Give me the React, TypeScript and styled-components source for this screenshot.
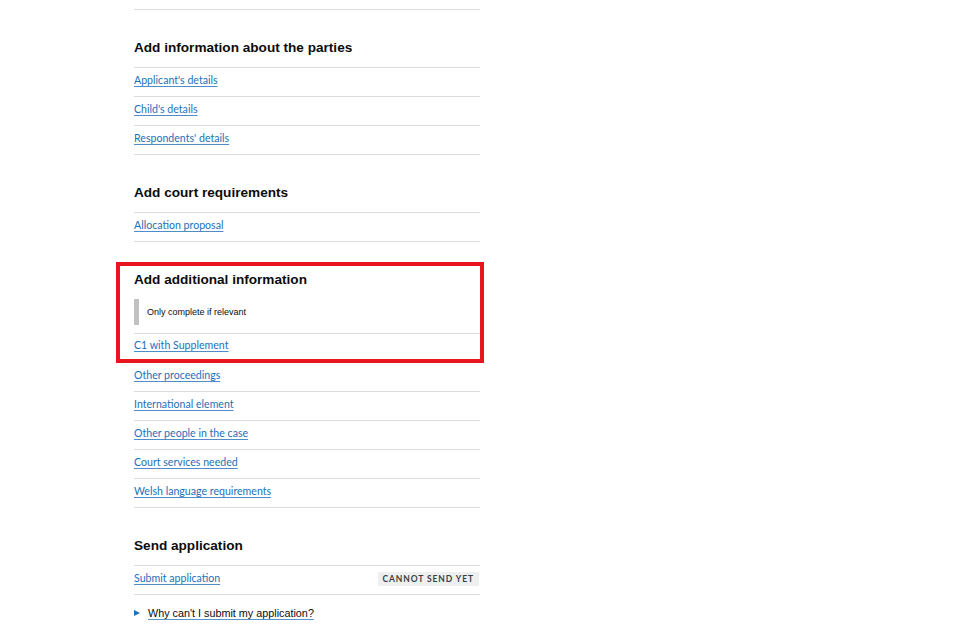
import styled, { createGlobalStyle } from "styled-components";

const GlobalStyle = createGlobalStyle`
  body {
    margin: 0;
    background: #ffffff;
    font-family: "Liberation Sans", Arial, sans-serif;
    color: #0b0c0c;
  }
`;

type Task = { label: string; tag?: string };

const Column = styled.div`
  width: 346px;
  margin-left: 134px;
  display: flex;
  flex-direction: column;
`;

const TopRule = styled.div`
  height: 9px;
  border-bottom: 1px solid #dcdcdc;
`;

const Section = styled.section<{ $tight?: boolean }>`
  padding-top: ${({ $tight }) => ($tight ? "4px" : "28px")};
`;

const Heading = styled.h2`
  margin: 0 0 9px;
  font-size: 13.6px;
  line-height: 20px;
  font-weight: 700;
  color: #0b0c0c;
`;

const List = styled.ul<{ $open?: boolean }>`
  list-style: none;
  margin: 0;
  padding: 0;
  border-top: ${({ $open }) => ($open ? "none" : "1px solid #dcdcdc")};
`;

const Row = styled.li<{ $last?: boolean }>`
  height: ${({ $last }) => ($last ? "25px" : "28px")};
  display: flex;
  align-items: center;
  justify-content: space-between;
  border-bottom: ${({ $last }) => ($last ? "none" : "1px solid #dcdcdc")};
`;

const TaskLink = styled.a`
  font-family: Lato, "Noto Sans", sans-serif;
  font-size: 10.6px;
  color: #1d70b8;
  text-decoration: underline;
  text-decoration-color: #4f8cc9;
  text-underline-offset: 2px;
  margin-top: -4px;
`;

const Tag = styled.span`
  display: inline-flex;
  align-items: center;
  height: 14px;
  padding: 0 5px;
  background: #eeefef;
  color: #383f43;
  font-family: Lato, sans-serif;
  font-weight: 700;
  font-size: 8.5px;
  letter-spacing: 0.9px;
  margin-right: 1px;
  margin-top: -2px;
`;

const Highlight = styled.div`
  margin: 20px -4px 0 -18px;
  padding-left: 14px;
  border: 4px solid #e8141f;
`;

const Inset = styled.div`
  height: 26px;
  margin: 9px 0 8px;
  padding-left: 8px;
  border-left: 5px solid #bfc1c3;
  display: flex;
  align-items: center;
  font-size: 9px;
  color: #0b0c0c;
`;

const Details = styled.div`
  margin-top: 10px;
  display: flex;
  align-items: center;
  gap: 8px;
`;

const Marker = styled.span`
  width: 0;
  height: 0;
  border-top: 3.5px solid transparent;
  border-bottom: 3.5px solid transparent;
  border-left: 6px solid #1d70b8;
`;

const Summary = styled.span`
  font-size: 10.8px;
  line-height: 16px;
  color: #0b0c0c;
  text-decoration: underline;
  text-decoration-color: #5694ca;
  text-underline-offset: 2px;
`;

const TaskList = ({
  tasks,
  lastOpen,
  open,
}: {
  tasks: Task[];
  lastOpen?: boolean;
  open?: boolean;
}) => (
  <List $open={open}>
    {tasks.map((task, i) => (
      <Row key={task.label} $last={lastOpen && i === tasks.length - 1}>
        <TaskLink href="#">{task.label}</TaskLink>
        {task.tag && <Tag>{task.tag}</Tag>}
      </Row>
    ))}
  </List>
);

const parties: Task[] = [
  { label: "Applicant's details" },
  { label: "Child's details" },
  { label: "Respondents' details" },
];

const court: Task[] = [{ label: "Allocation proposal" }];

const additional: Task[] = [
  { label: "Other proceedings" },
  { label: "International element" },
  { label: "Other people in the case" },
  { label: "Court services needed" },
  { label: "Welsh language requirements" },
];

export default function App() {
  return (
    <>
      <GlobalStyle />
      <Column>
        <TopRule />
        <Section>
          <Heading>Add information about the parties</Heading>
          <TaskList tasks={parties} />
        </Section>
        <Section>
          <Heading>Add court requirements</Heading>
          <TaskList tasks={court} />
        </Section>
        <Highlight>
          <Section $tight>
            <Heading>Add additional information</Heading>
            <Inset>Only complete if relevant</Inset>
            <TaskList tasks={[{ label: "C1 with Supplement" }]} lastOpen />
          </Section>
        </Highlight>
        <TaskList tasks={additional} open />
        <Section>
          <Heading>Send application</Heading>
          <TaskList tasks={[{ label: "Submit application", tag: "CANNOT SEND YET" }]} />
          <Details>
            <Marker />
            <Summary>Why can't I submit my application?</Summary>
          </Details>
        </Section>
      </Column>
    </>
  );
}
